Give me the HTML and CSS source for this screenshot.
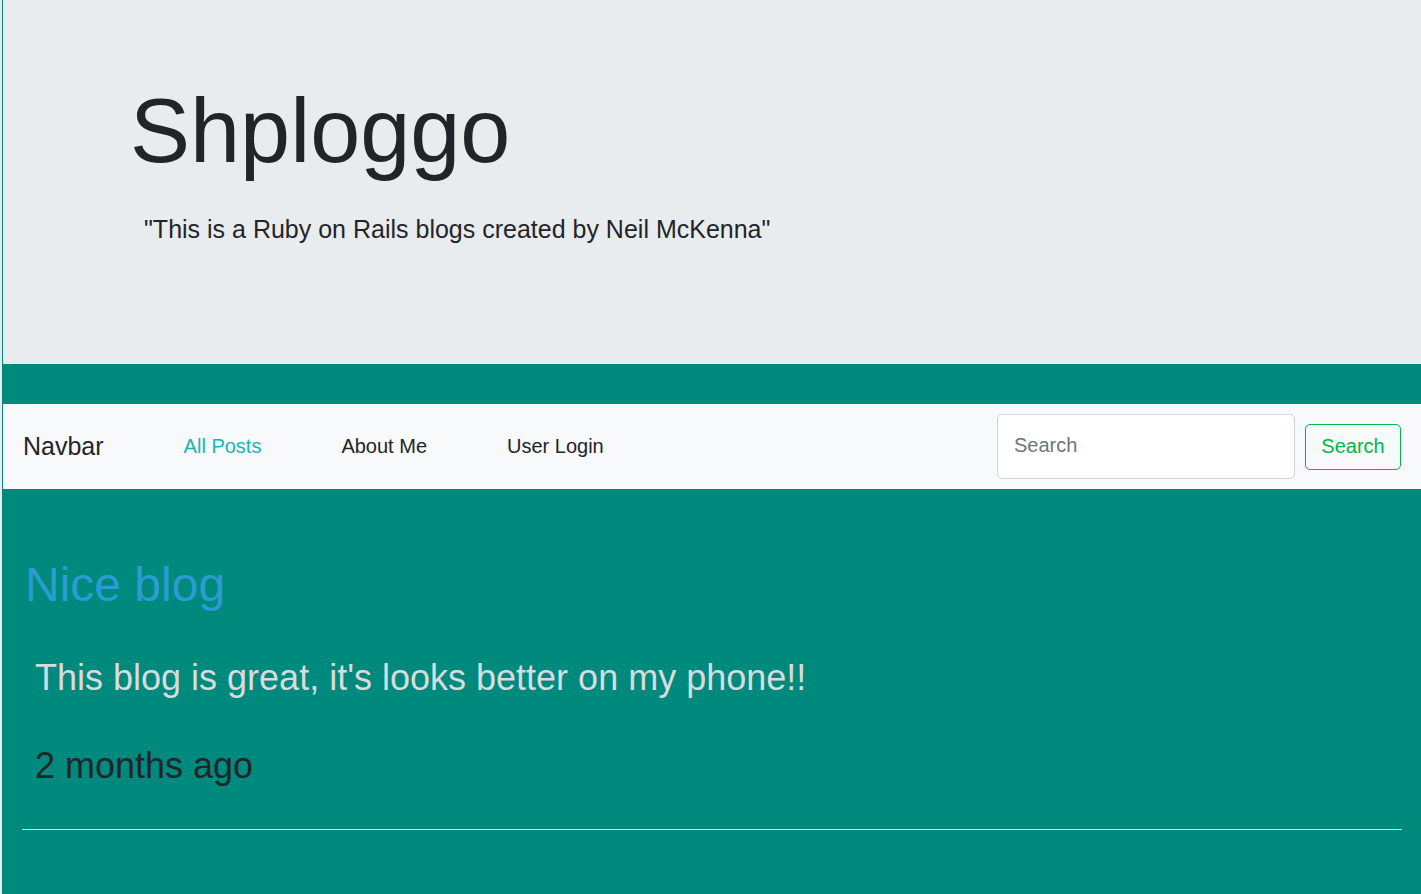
FILE: index.html
```html
<!DOCTYPE html>
<html lang="en">
<head>
<meta charset="utf-8">
<title>Shploggo</title>
<link rel="stylesheet" href="styles.css">
</head>
<body>
<div class="page">
  <header class="jumbotron">
    <h1 class="site-title">Shploggo</h1>
    <p class="lead">"This is a Ruby on Rails blogs created by Neil McKenna"</p>
  </header>
  <div class="band"></div>
  <nav class="navbar">
    <a class="brand" href="#">Navbar</a>
    <ul class="nav-links">
      <li><a class="nav-link active" href="#">All Posts</a></li>
      <li><a class="nav-link" href="#">About Me</a></li>
      <li><a class="nav-link" href="#">User Login</a></li>
    </ul>
    <form class="search-form">
      <input class="search-input" type="search" placeholder="Search">
      <button class="search-btn" type="button">Search</button>
    </form>
  </nav>
  <main class="content">
    <article class="post">
      <h2 class="post-title">Nice blog</h2>
      <p class="post-body">This blog is great, it's looks better on my phone!!</p>
      <p class="post-time">2 months ago</p>
    </article>
    <hr class="divider">
  </main>
</div>
</body>
</html>
```
FILE: styles.css
```css
html {
  background: #e9ecef;
  height: 100%;
}
body {
  margin: 0 0 0 2px;
  min-height: 100%;
  font-family: "Liberation Sans", Arial, sans-serif;
  color: #212529;
}
.page {
  background: #00897d;
  padding-left: 1px;
  min-height: 894px;
}
.jumbotron {
  background: #e9ecef;
  height: 364px;
  box-sizing: border-box;
  padding: 77px 0 0 127px;
}
.site-title {
  margin: 0;
  font-size: 90px;
  font-weight: 400;
  line-height: 108px;
  color: #212529;
}
.lead {
  margin: 26px 0 0 14px;
  font-size: 25px;
  line-height: 37.5px;
}
.band {
  height: 40px;
}
.navbar {
  background: #f8f9fa;
  height: 85px;
  box-sizing: border-box;
  padding: 10px 20px;
  display: flex;
  align-items: center;
}
.brand {
  font-size: 25px;
  color: #212529;
  text-decoration: none;
  margin-right: 40px;
}
.nav-links {
  list-style: none;
  margin: 0;
  padding: 0;
  display: flex;
}
.nav-link {
  display: block;
  padding: 0 40px;
  font-size: 20px;
  color: #212529;
  text-decoration: none;
}
.nav-link.active {
  color: #17b5b8;
}
.search-form {
  margin-left: auto;
  display: flex;
  align-items: center;
}
.search-input {
  width: 298px;
  height: 65px;
  box-sizing: border-box;
  border: 1px solid #ced4da;
  border-radius: 5px;
  background: #fff;
  padding: 0 0 2px 16px;
  font-family: inherit;
  font-size: 20px;
  color: #495057;
}
.search-input::placeholder {
  color: #6c757d;
}
.search-btn {
  margin-left: 10px;
  width: 96px;
  height: 46px;
  box-sizing: border-box;
  border: 1px solid #00b74a;
  border-radius: 5px;
  background: transparent;
  color: #00b74a;
  font-family: inherit;
  font-size: 20px;
  padding: 0;
}
.content {
  padding: 66px 19px 0;
}
.post-title {
  margin: 0 0 0 3px;
  font-size: 48px;
  font-weight: 400;
  line-height: 60px;
  color: #2b9cd3;
}
.post-body {
  margin: 42px 0 0 13px;
  font-size: 36px;
  line-height: 42px;
  color: #d7dbdb;
}
.post-time {
  margin: 46px 0 0 13px;
  font-size: 36px;
  line-height: 42px;
  color: #212529;
}
.divider {
  margin: 42px 0 0;
  border: 0;
  border-top: 1px solid #b8efe4;
  height: 0;
}
```
